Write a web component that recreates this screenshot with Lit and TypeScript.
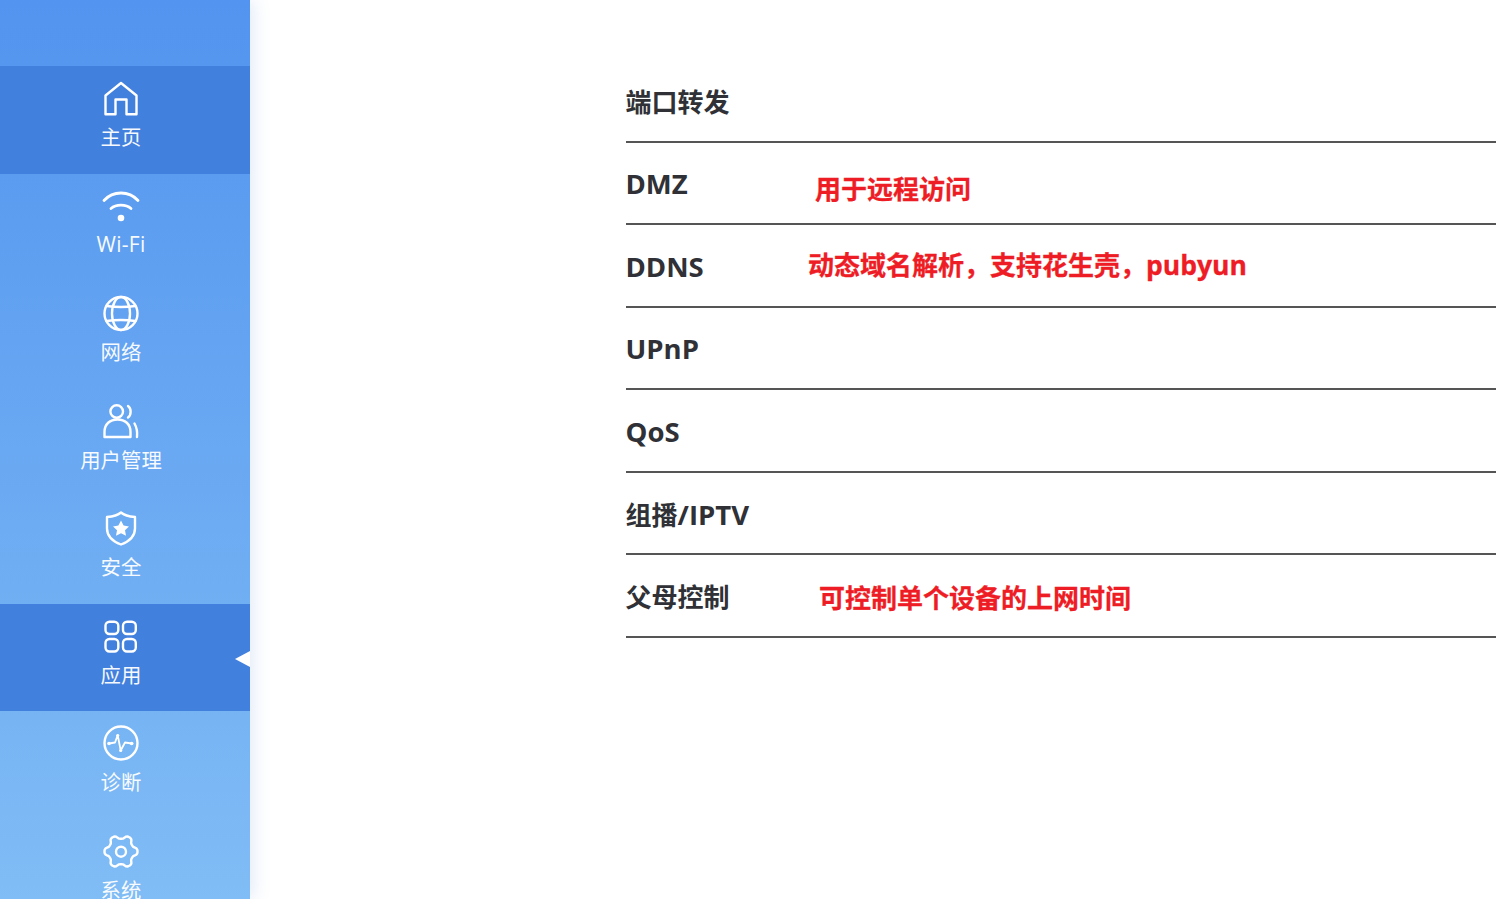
import { LitElement, html, css, svg } from "lit";
import { customElement } from "lit/decorators.js";

function gearPath(cx: number, cy: number): string {
  const pts: string[] = [];
  const steps = 96;
  for (let i = 0; i < steps; i++) {
    const a = (i / steps) * Math.PI * 2;
    const w = Math.tanh(1.6 * Math.cos(6 * a)) / Math.tanh(1.6);
    const r = 14.6 + 1.9 * w;
    pts.push(`${(cx + r * Math.cos(a)).toFixed(2)} ${(cy + r * Math.sin(a)).toFixed(2)}`);
  }
  return `M${pts.join("L")}Z`;
}

const icons: Record<string, unknown> = {
  home: svg`<path d="M12.5 33.2H2.5V14.5L18 2L33.5 14.5V33.2H23.5V18.5H12.5Z"/>`,
  wifi: svg`<path d="M1 11.500C10 1.500 26 1.500 35 11.500" stroke-width="2.800"/><path d="M8 19.500C13 15 23 15 28 19.500" stroke-width="2.800"/><circle cx="18" cy="29" r="3.300" fill="#fff" stroke="none"/>`,
  globe: svg`<circle cx="18" cy="17.500" r="16.500"/><ellipse cx="18" cy="17.500" rx="9" ry="16.500"/><path d="M3.500 10Q18 12 32.500 10M3.500 25Q18 23 32.500 25"/>`,
  users: svg`<circle cx="13.700" cy="7.500" r="6.300"/><path d="M1.500 33V28C1.500 20 7 15.500 14.500 15.500C22 15.500 27.500 20 27.500 28V33Z"/><path d="M25 2C28.500 4.500 28.500 11 25 13.500"/><path d="M31.500 19.500C33.500 23 34.500 28 34 33"/>`,
  shield: svg`<path d="M18 1.500C21.500 4.500 26.500 5.500 32 6V17.500C32 25 26 30.500 18 33.500C10 30.500 4 25 4 17.500V6C9.500 5.500 14.500 4.500 18 1.500Z"/><path d="M18 9.500L20.600 14.600L26 15.400L22 19.300L23 24.800L18 22.200L13 24.800L14 19.300L10 15.400L15.400 14.600Z" fill="#fff" stroke="none"/>`,
  apps: svg`<rect x="2.500" y="2.700" width="12.800" height="12.300" rx="4"/><rect x="20" y="2.700" width="12.800" height="12.300" rx="4"/><rect x="2.500" y="20" width="12.800" height="12.500" rx="4"/><rect x="20" y="20" width="12.800" height="12.500" rx="4"/>`,
  pulse: svg`<circle cx="18" cy="17" r="16.500"/><path d="M6 17.500L12 16.500L14.700 9.200L17.700 24.500L22 16.500L28.700 17.500" stroke-width="1.800"/><circle cx="6" cy="17.500" r="1.800" fill="#fff" stroke="none"/><circle cx="14.700" cy="9.500" r="1.600" fill="#fff" stroke="none"/><circle cx="17.700" cy="24.500" r="1.600" fill="#fff" stroke="none"/><circle cx="28.700" cy="17.500" r="1.800" fill="#fff" stroke="none"/>`,
  gear: svg`<path d=${gearPath(18, 17.5)}/><circle cx="18" cy="17.700" r="5"/>`,
};

const nav = [
  { icon: "home", label: "主页", active: true },
  { icon: "wifi", label: "Wi-Fi", latin: true },
  { icon: "globe", label: "网络" },
  { icon: "users", label: "用户管理" },
  { icon: "shield", label: "安全" },
  { icon: "apps", label: "应用", active: true, pointer: true },
  { icon: "pulse", label: "诊断" },
  { icon: "gear", label: "系统" },
];

const rows: { cjk?: string; lat?: string; note?: string; noteLat?: string; kind?: string }[] = [
  { cjk: "端口转发" },
  { lat: "DMZ", note: "用于远程访问", kind: "n1" },
  { lat: "DDNS", note: "动态域名解析，支持花生壳，", noteLat: "pubyun", kind: "n2" },
  { lat: "UPnP" },
  { lat: "QoS" },
  { cjk: "组播", lat: "/IPTV" },
  { cjk: "父母控制", note: "可控制单个设备的上网时间", kind: "n3" },
];

@customElement("app-root")
export class AppRoot extends LitElement {
  static styles = css`
    :host {
      display: flex;
      height: 100vh;
      overflow: hidden;
      background: #fff;
      font-family: "Open Sans", "Noto Sans CJK SC", sans-serif;
    }
    .side {
      flex: 0 0 250px;
      height: 899px;
      padding-top: 66px;
      box-sizing: border-box;
      overflow: hidden;
      background: linear-gradient(180deg, #5294ef 0%, #80bcf5 100%);
      box-shadow: 4px 0 16px rgba(82, 132, 210, 0.16);
      position: relative;
      z-index: 1;
    }
    .item {
      position: relative;
      height: 107.5px;
      padding-top: 15px;
      box-sizing: border-box;
      display: flex;
      flex-direction: column;
      align-items: center;
      padding-right: 8px;
      color: #fff;
    }
    .item.active {
      background: #4280dd;
    }
    .item svg {
      display: block;
      width: 36px;
      height: 36px;
      overflow: visible;
      fill: none;
      stroke: #fff;
      stroke-width: 2.4;
      stroke-linecap: round;
      stroke-linejoin: round;
    }
    .label {
      margin-top: 5px;
      font-size: 20.4px;
      line-height: 30px;
      font-weight: 400;
      opacity: 0.95;
      white-space: nowrap;
    }
    .label.latin {
      font-size: 21px;
      letter-spacing: 0.3px;
      margin-top: 4px;
    }
    .pointer {
      position: absolute;
      right: 0;
      top: 47px;
      width: 0;
      height: 0;
      border-style: solid;
      border-width: 8px 15px 8px 0;
      border-color: transparent #fff transparent transparent;
    }
    .main {
      flex: 1;
      min-width: 0;
      padding: 60px 0 0 375.5px;
    }
    .row {
      position: relative;
      height: 82.5px;
      box-sizing: border-box;
      padding-top: 2px;
      display: flex;
      align-items: center;
      border-bottom: 2px solid #555;
      font-size: 26px;
      font-weight: 700;
      color: #2f3136;
      white-space: nowrap;
    }
    .lat {
      font-size: 27.5px;
    }
    .note {
      position: absolute;
      color: #ee1c25;
      font-size: 26px;
      font-weight: 700;
      line-height: 36px;
      -webkit-text-stroke: 0.3px #ee1c25;
    }
    .note .lat {
      font-size: 26.5px;
    }
    .n1 { left: 189.5px; top: 28px; }
    .n2 { left: 182.5px; top: 22px; }
    .n3 { left: 193.5px; top: 25px; }
  `;

  render() {
    return html`
      <aside class="side">
        ${nav.map(
          (n) => html`
            <div class="item ${n.active ? "active" : ""}">
              <svg viewBox="0 0 36 36">${icons[n.icon]}</svg>
              <div class="label ${n.latin ? "latin" : ""}">${n.label}</div>
              ${n.pointer ? html`<span class="pointer"></span>` : ""}
            </div>
          `
        )}
      </aside>
      <main class="main">
        ${rows.map(
          (r) => html`
            <div class="row">
              <span>${r.cjk ?? ""}${r.lat ? html`<span class="lat">${r.lat}</span>` : ""}</span>
              ${r.note
                ? html`<span class="note ${r.kind}">${r.note}${r.noteLat ? html`<span class="lat">${r.noteLat}</span>` : ""}</span>`
                : ""}
            </div>
          `
        )}
      </main>
    `;
  }
}
